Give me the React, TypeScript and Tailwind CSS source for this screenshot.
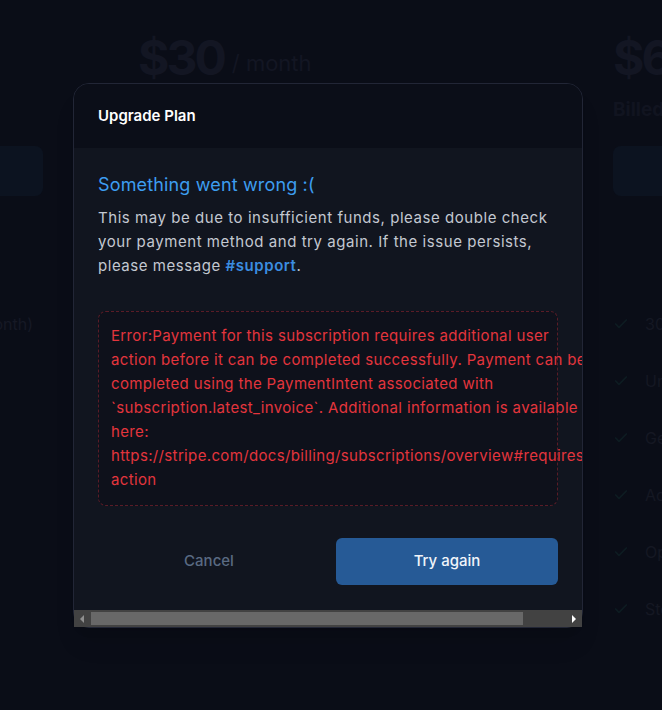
import { Check } from "lucide-react";

const errorLines = [
  "Error:Payment for this subscription requires additional user",
  "action before it can be completed successfully. Payment can be",
  "completed using the PaymentIntent associated with",
  "`subscription.latest_invoice`. Additional information is available",
  "here:",
  "https://stripe.com/docs/billing/subscriptions/overview#requires-",
  "action",
];

const features = ["300 credits", "Unlimited projects", "Generate reports", "Access to API", "Open support", "Steady updates"];

function PlanCard({ price, billed, left }: { price: string; billed: string; left?: boolean }) {
  return (
    <div className="flex w-[380px] shrink-0 flex-col">
      <div className="flex h-[64px] items-end gap-2">
        <span className="text-[48px] font-bold leading-none tracking-[-3px] text-[#131623]">{price}</span>
        <span className="pb-[2px] text-[22px] text-[#131623]">/ month</span>
      </div>
      <div className="mt-[14px] text-[19px] font-bold text-[#111420]">{billed}</div>
      <div className="mt-[21px] h-[50px] rounded-lg bg-[#0c1320]" />
      {left ? (
        <div className="mt-[116px] pr-[10px] text-right text-[16px] text-[#161925]">
          Everything in Starter (billed per month)
        </div>
      ) : (
        <ul className="mt-[116px] flex flex-col gap-[33px]">
          {features.map((f) => (
            <li key={f} className="flex items-center gap-4 text-[16px] text-[#151823]">
              <Check className="h-4 w-4 text-[#0e1c22]" strokeWidth={2.5} />
              {f}
            </li>
          ))}
        </ul>
      )}
    </div>
  );
}

// horizontal scrollbar of the dialog body (dark scheme)
function ScrollBar() {
  return (
    <div className="flex h-[17px] bg-[#424242]">
      <div className="flex w-[17px] items-center justify-center">
        <svg width="5" height="8" viewBox="0 0 5 8">
          <path d="M4 0 L0 4 L4 8 Z" fill="#8f8f8f" />
        </svg>
      </div>
      <div className="flex flex-1 items-center">
        <div className="h-[13px] w-[432px] bg-[#686868]" />
      </div>
      <div className="flex w-[17px] items-center justify-center">
        <svg width="5" height="8" viewBox="0 0 5 8">
          <path d="M1 0 L5 4 L1 8 Z" fill="#ffffff" />
        </svg>
      </div>
    </div>
  );
}

export default function App() {
  return (
    <div className="relative h-[710px] w-[662px] overflow-hidden bg-[#0a0d17] font-['Inter',sans-serif]">
      {/* dimmed pricing page behind the dialog */}
      <div className="ml-[-337px] flex gap-[95px] pt-[18px]">
        <PlanCard price="$10" billed="Billed monthly" left />
        <PlanCard price="$30" billed="Billed monthly" />
        <PlanCard price="$60" billed="Billed yearly" />
      </div>

      <div className="absolute left-[73px] top-[83px] w-[510px] rounded-2xl border border-[#222636] bg-[#11151f] shadow-xl">
        <div className="overflow-hidden rounded-t-[15px]">
          <div className="flex h-[64px] items-center bg-[#0b0e18] px-6 text-[15px] font-semibold text-white">
            Upgrade Plan
          </div>
          <div className="px-6 pb-[25px] pt-[23px]">
            <h2 className="text-[18px] leading-7 tracking-[0.15px] text-[#3d9df0]">Something went wrong :(</h2>
            <p className="mt-[7px] w-[460px] text-[15px] leading-6 tracking-[0.55px] text-[#c3c8d1]">
              This may be due to insufficient funds, please double check your payment method and try again. If the
              issue persists, please message <span className="font-semibold text-[#3b8de0]">#support</span>.
            </p>
            <div className="mt-[33px] w-[460px] rounded-lg border border-dashed border-[#5a1c27] bg-[#0e111b] pb-[13px] pl-3 pt-3">
              {errorLines.map((line) => (
                <div key={line} className="whitespace-nowrap text-[15px] leading-6 tracking-[0.35px] text-[#e3353d]">
                  {line}
                </div>
              ))}
            </div>
            <div className="mt-8 grid w-[460px] grid-cols-2 gap-4">
              <button className="h-[47px] text-[15px] font-medium text-[#5a6a82]">Cancel</button>
              <button className="h-[47px] rounded-md bg-[#265a96] text-[15px] font-medium text-[#f0f4fa]">
                Try again
              </button>
            </div>
          </div>
        </div>
        <ScrollBar />
      </div>
    </div>
  );
}
